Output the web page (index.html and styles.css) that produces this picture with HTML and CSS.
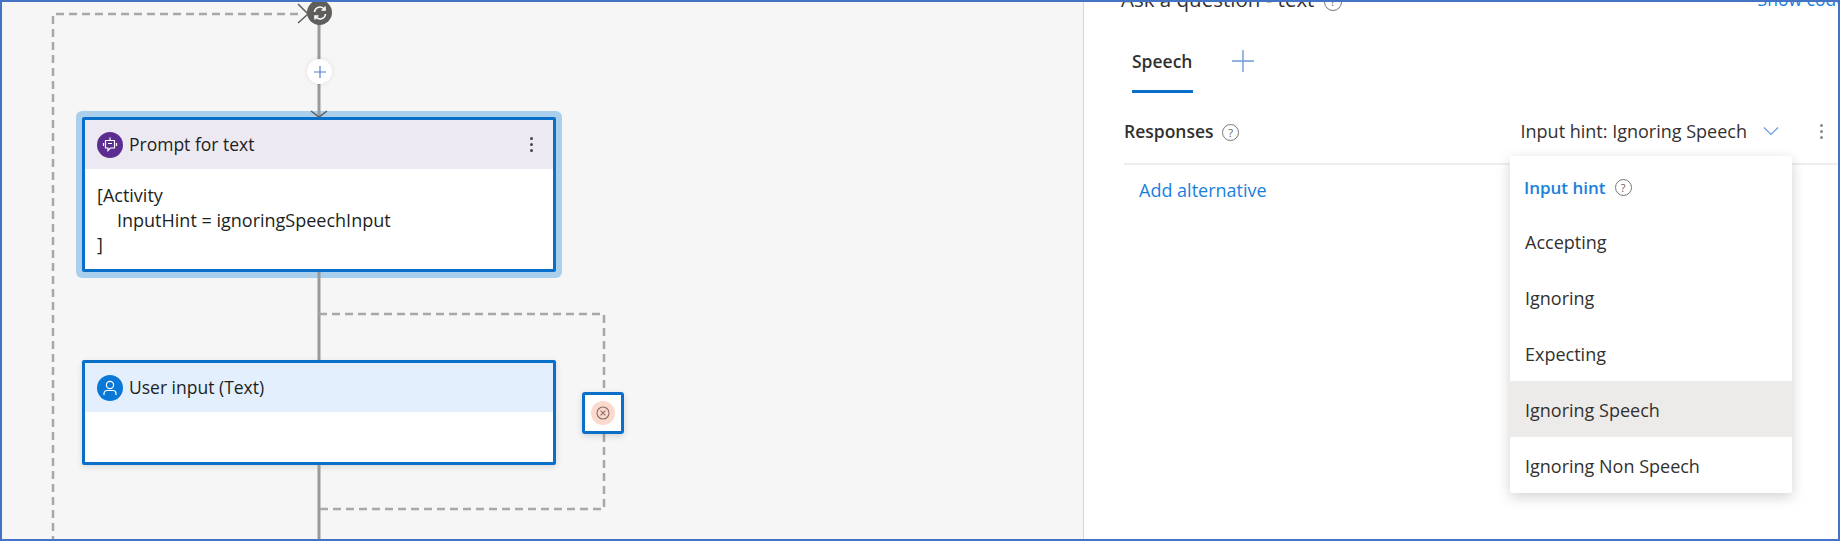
FILE: index.html
```html
<!DOCTYPE html>
<html lang="en">
<head>
    <meta charset="UTF-8">
    <title>Ask a question - text</title>
    <link rel="stylesheet" href="styles.css">
</head>
<body>
<div class="frame">

    <!-- authoring canvas -->
    <div class="canvas">
        <svg class="wires" width="1082" height="537" viewBox="0 0 1082 537">
            <g class="wire">
                <path d="M317 22V58M317 82V114"/>
                <path d="M317 270V358M317 463V540"/>
            </g>
            <path class="wire-head" d="M309 109L317 115L325 109"/>
            <path class="wire-head" d="M296 2L306 12L296 21"/>
            <g class="dashed">
                <path d="M296 12H51V540"/>
                <path d="M317 312H602V390"/>
                <path d="M602 432V507H317"/>
            </g>
        </svg>

        <div class="loop-icon">
            <svg width="18" height="18" viewBox="0 0 18 18">
                <path d="M3.5 8A5.5 5.5 0 0 1 13.5 5.5M14.5 10A5.5 5.5 0 0 1 4.5 12.5"/>
                <path d="M14 2.5V6H10.5M4 15.5V12H7.5"/>
            </svg>
        </div>

        <div class="add-btn">
            <svg width="12" height="12" viewBox="0 0 12 12"><path d="M6 0V12M0 6H12"/></svg>
        </div>

        <div class="node node-prompt">
            <div class="node-head">
                <span class="node-icon">
                    <svg width="18" height="18" viewBox="0 0 18 18">
                        <path d="M9 1.5V4M4.5 4.5H13.5V12H9.5L7 14.5V12H4.5Z"/>
                        <path d="M7 7.5H11M2.5 7V10M15.5 7V10"/>
                    </svg>
                </span>
                <span class="node-title">Prompt for text</span>
                <span class="kebab"><i></i><i></i><i></i></span>
            </div>
            <div class="node-body">
                <div>[Activity</div>
                <div class="indent">InputHint = ignoringSpeechInput</div>
                <div>]</div>
            </div>
        </div>

        <div class="node node-input">
            <div class="node-head">
                <span class="node-icon">
                    <svg width="18" height="18" viewBox="0 0 18 18">
                        <circle cx="9" cy="6" r="3.6"/>
                        <path d="M3 16V14.5A3 3 0 0 1 6 11.5H12A3 3 0 0 1 15 14.5V16"/>
                    </svg>
                </span>
                <span class="node-title">User input (Text)</span>
            </div>
        </div>

        <div class="catch-box">
            <span class="catch-dot">
                <svg width="14" height="14" viewBox="0 0 14 14">
                    <circle cx="7" cy="7" r="6"/>
                    <path d="M4.6 4.6L9.4 9.4M9.4 4.6L4.6 9.4"/>
                </svg>
            </span>
        </div>
    </div>

    <!-- property panel -->
    <div class="panel">
        <div class="panel-title">
            <span class="title-text">Ask a question - text <span class="help help-title">?</span></span>
            <a class="link show-code">Show code</a>
        </div>

        <div class="tabs">
            <span class="tab">Speech</span>
            <svg class="tab-add" width="22" height="22" viewBox="0 0 22 22"><path d="M11 0V22M0 11H22"/></svg>
        </div>

        <div class="responses">
            <span class="responses-label">Responses <span class="help">?</span></span>
            <span class="hint-select">
                Input hint: Ignoring Speech
                <svg width="16" height="10" viewBox="0 0 16 10"><path d="M1 1.5L8 8.5L15 1.5"/></svg>
            </span>
            <span class="kebab"><i></i><i></i><i></i></span>
        </div>

        <a class="link add-alt">Add alternative</a>

        <div class="menu">
            <div class="menu-head">Input hint <span class="help help-blue">?</span></div>
            <div class="menu-item">Accepting</div>
            <div class="menu-item">Ignoring</div>
            <div class="menu-item">Expecting</div>
            <div class="menu-item selected">Ignoring Speech</div>
            <div class="menu-item">Ignoring Non Speech</div>
        </div>
    </div>

</div>
</body>
</html>
```

FILE: styles.css
```css
html, body {
    margin: 0;
    padding: 0;
    background-color: #ffffff;
}

body {
    font-family: "Open Sans", "Noto Sans", sans-serif;
    font-size: 17.5px;
    color: #323130;
}

.frame {
    box-sizing: border-box;
    width: 1840px;
    height: 541px;
    border: 2px solid #4472c4;
    display: flex;
    overflow: hidden;
}

/* canvas */
.canvas {
    position: relative;
    width: 1081px;
    flex: none;
    background-color: #f6f6f6;
    border-right: 1px solid #d8d8d8;
}

.wires {
    position: absolute;
    top: 0;
    left: 0;
    z-index: 2;
    fill: none;
}

.wire path {
    stroke: #9a9a9a;
    stroke-width: 3;
}

.wire-head {
    stroke: #605e5c;
    stroke-width: 1.5;
}

.dashed path {
    stroke: #a8a8a8;
    stroke-width: 2.5;
    stroke-dasharray: 8 5;
}

.loop-icon {
    position: absolute;
    z-index: 3;
    left: 305px;
    top: -2px;
    width: 25px;
    height: 25px;
    border-radius: 50%;
    background-color: #605e5c;
    display: flex;
    justify-content: center;
    align-items: center;
}

.loop-icon svg {
    fill: none;
    stroke: #ffffff;
    stroke-width: 1.6;
}

.add-btn {
    position: absolute;
    z-index: 3;
    left: 305px;
    top: 57px;
    width: 25px;
    height: 25px;
    border-radius: 50%;
    background-color: #ffffff;
    box-shadow: 0 0 5px rgba(0, 0, 0, 0.1);
    display: flex;
    justify-content: center;
    align-items: center;
}

.add-btn svg {
    stroke: #5b7fd8;
    stroke-width: 1.2;
}

.node {
    position: absolute;
    box-sizing: border-box;
    left: 80px;
    width: 474px;
    background-color: #ffffff;
    border: 3px solid #0a6fc9;
    border-radius: 2px;
}

.node-prompt {
    top: 115px;
    height: 155px;
    box-shadow: 0 0 0 6px #a9cfec;
}

.node-input {
    top: 358px;
    height: 105px;
    box-shadow: 0 2px 6px rgba(0, 0, 0, 0.12);
}

.node-head {
    height: 49px;
    padding: 0 13px 0 12px;
    display: flex;
    align-items: center;
    gap: 6px;
}

.node-prompt .node-head {
    background-color: #ede9f3;
}

.node-input .node-head {
    background-color: #e3effc;
}

.node-icon {
    width: 26px;
    height: 26px;
    border-radius: 50%;
    display: flex;
    justify-content: center;
    align-items: center;
    flex: none;
}

.node-icon svg {
    fill: none;
    stroke: #ffffff;
    stroke-width: 1.2;
}

.node-prompt .node-icon {
    background-color: #5c2d91;
}

.node-input .node-icon {
    background-color: #0a78d6;
}

.node-title {
    flex: 1;
    color: #201f1e;
    padding-bottom: 2px;
}

.node-body {
    padding: 14px 12px 0;
    font-size: 18px;
    line-height: 24.5px;
    color: #201f1e;
}

.indent {
    padding-left: 20px;
}

.kebab {
    display: inline-flex;
    flex-direction: column;
    align-items: center;
    gap: 3px;
    width: 10px;
}

.kebab i {
    width: 3px;
    height: 3px;
    border-radius: 50%;
    background-color: #484644;
}

.node-head .kebab {
    margin-right: 4px;
}

.catch-box {
    position: absolute;
    z-index: 3;
    box-sizing: border-box;
    left: 580px;
    top: 390px;
    width: 42px;
    height: 42px;
    background-color: #ffffff;
    border: 3px solid #0a6fc9;
    border-radius: 3px;
    box-shadow: 0 2px 6px rgba(0, 0, 0, 0.15);
    display: flex;
    justify-content: center;
    align-items: center;
}

.catch-dot {
    width: 24px;
    height: 24px;
    border-radius: 50%;
    background-color: #fbd9cd;
    display: flex;
    justify-content: center;
    align-items: center;
}

.catch-dot svg {
    fill: none;
    stroke: #8a6d68;
    stroke-width: 1.1;
}

/* right panel */
.panel {
    position: relative;
    flex: 1;
    background-color: #ffffff;
}

.panel-title {
    height: 8px;
    padding: 0 0 0 37px;
    display: flex;
    justify-content: space-between;
    font-size: 20.5px;
    line-height: 24px;
    margin-top: -15px;
    margin-bottom: 15px;
}

.show-code {
    font-size: 17.5px;
    margin-right: -8px;
}

.link {
    color: #1a7fdc;
}

.tabs {
    display: flex;
    align-items: flex-start;
    height: 89px;
    padding-left: 48px;
    padding-top: 40px;
    box-sizing: border-box;
    gap: 39px;
}

.tab {
    display: block;
    width: 61px;
    height: 40px;
    line-height: 22px;
    border-bottom: 3px solid #0a6fc9;
    font-weight: 600;
    white-space: nowrap;
}

.tab-add {
    stroke: #6f9bd8;
    stroke-width: 1.4;
}

.responses {
    display: flex;
    align-items: center;
    height: 66px;
    box-sizing: border-box;
    margin-left: 40px;
    border-bottom: 2px solid #eeeeee;
}

.responses-label {
    flex: 1;
    font-weight: 600;
}

.hint-select {
    display: flex;
    align-items: center;
    gap: 16px;
    font-size: 18px;
}

.hint-select svg {
    fill: none;
    stroke: #6f9bd8;
    stroke-width: 1.2;
}

.responses .kebab {
    margin: 0 12px 0 37px;
}

.responses .kebab i {
    background-color: #8a8886;
}

.add-alt {
    display: block;
    margin: 13px 0 0 55px;
    font-size: 18px;
}

.help {
    display: inline-block;
    box-sizing: border-box;
    width: 17px;
    height: 17px;
    margin-left: 4px;
    border: 1px solid #797775;
    border-radius: 50%;
    font-size: 11px;
    font-weight: 400;
    line-height: 15px;
    text-align: center;
    vertical-align: 1px;
    color: #605e5c;
}

.help-title {
    width: 18px;
    height: 18px;
}

.help-blue {
    margin-left: 9px;
}

.menu {
    position: absolute;
    z-index: 5;
    left: 426px;
    top: 154px;
    width: 282px;
    background-color: #ffffff;
    border-radius: 2px;
    box-shadow: 0 4px 14px rgba(0, 0, 0, 0.18);
}

.menu-head {
    height: 57px;
    padding: 6px 0 0 14px;
    box-sizing: border-box;
    display: flex;
    align-items: center;
    font-size: 17px;
    font-weight: 600;
    color: #1a7fdc;
}

.menu-item {
    height: 56px;
    padding: 2px 0 0 15px;
    box-sizing: border-box;
    display: flex;
    align-items: center;
    font-size: 18px;
}

.selected {
    background-color: #edebe9;
}
```
